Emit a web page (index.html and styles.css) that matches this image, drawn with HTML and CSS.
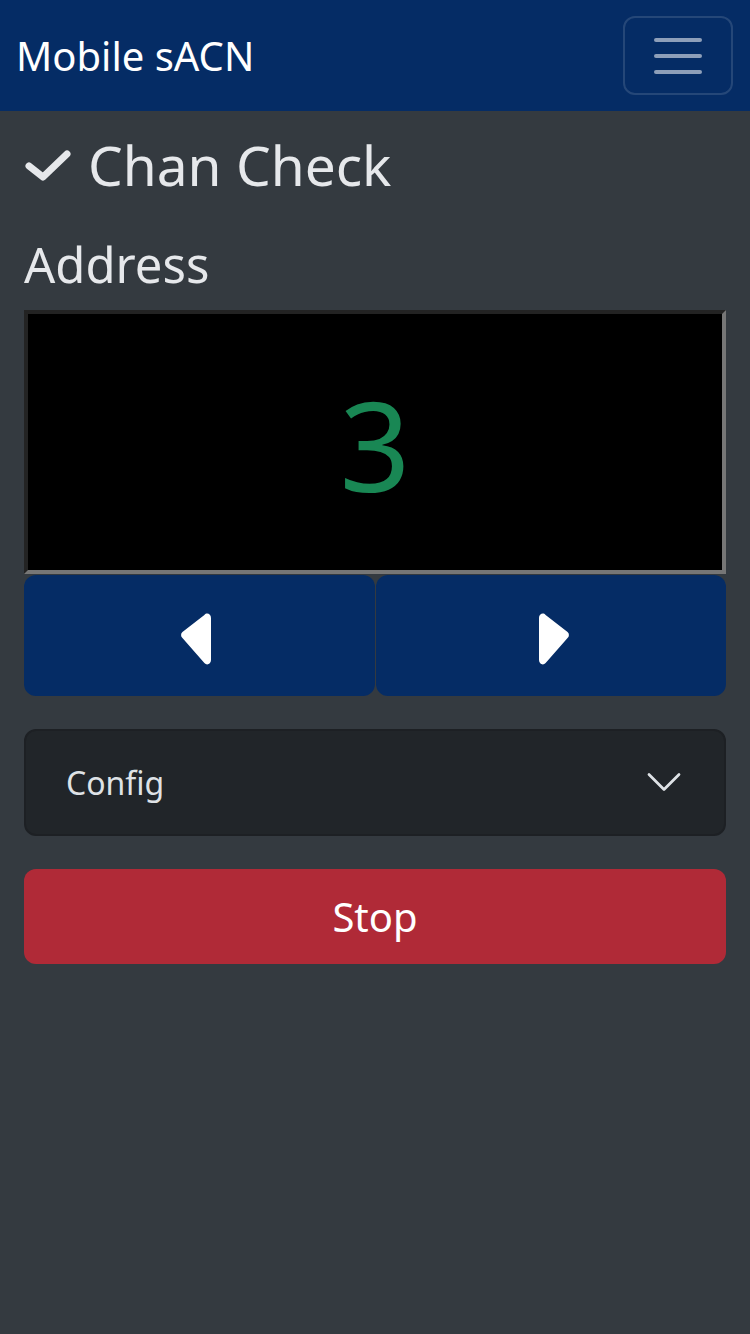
FILE: index.html
```html
<!DOCTYPE html>
<html lang="en">
<head>
<meta charset="utf-8">
<title>Mobile sACN</title>
<link rel="stylesheet" href="styles.css">
</head>
<body>
<nav class="navbar">
  <span class="brand">Mobile sACN</span>
  <button class="toggler" aria-label="Menu">
    <span class="bar"></span><span class="bar"></span><span class="bar"></span>
  </button>
</nav>
<main class="content">
  <h1 class="title">
    <svg class="check" viewBox="0 0 48 48" width="48" height="48" aria-hidden="true">
      <polyline points="5,23 19,34 43,11" fill="none" stroke="currentColor" stroke-width="7" stroke-linecap="round" stroke-linejoin="round"/>
    </svg>
    <span>Chan Check</span>
  </h1>
  <h2 class="label">Address</h2>
  <div class="display"><span class="value">3</span></div>
  <div class="arrows">
    <button class="arrow-btn" aria-label="Previous">
      <svg viewBox="0 0 16 16" width="64" height="64" aria-hidden="true"><path fill="#fff" d="m3.86 8.753 5.482 6.267c.646.738 1.658.205 1.658-.753V3.733c0-.958-1.012-1.49-1.658-.753L3.86 7.247a1 1 0 0 0 0 1.506z"/></svg>
    </button>
    <button class="arrow-btn" aria-label="Next">
      <svg viewBox="0 0 16 16" width="64" height="64" aria-hidden="true"><path fill="#fff" d="m12.14 8.753-5.482 6.267c-.646.738-1.658.205-1.658-.753V3.733c0-.958 1.012-1.49 1.658-.753l5.482 4.267a1 1 0 0 1 0 1.506z"/></svg>
    </button>
  </div>
  <div class="accordion">
    <button class="acc-btn">
      <span>Config</span>
      <svg viewBox="0 0 16 16" width="40" height="40" aria-hidden="true"><path d="M2 5L8 11L14 5" fill="none" stroke="#dee2e6" stroke-width="1.1" stroke-linecap="round" stroke-linejoin="round"/></svg>
    </button>
  </div>
  <button class="stop-btn">Stop</button>
</main>
</body>
</html>
```

FILE: styles.css
```css
* { box-sizing: border-box; }
html, body {
  margin: 0;
  padding: 0;
  background: #343a40;
  min-height: 100%;
}
body {
  font-family: "Noto Sans", "Open Sans", sans-serif;
  color: #dee2e6;
  width: 750px;
  min-height: 1334px;
}
button {
  font-family: inherit;
  cursor: pointer;
}
.navbar {
  height: 111px;
  background: #052c65;
  display: flex;
  align-items: center;
  justify-content: space-between;
  padding: 0 17px 0 16px;
}
.brand {
  font-size: 40px;
  color: #fff;
  line-height: 1.5;
}
.toggler {
  width: 110px;
  height: 79px;
  background: transparent;
  border: 2px solid rgba(255, 255, 255, 0.13);
  border-radius: 12px;
  display: flex;
  flex-direction: column;
  align-items: center;
  justify-content: center;
  gap: 12px;
  padding: 0;
}
.bar {
  display: block;
  width: 48px;
  height: 4px;
  border-radius: 2px;
  background: rgba(255, 255, 255, 0.55);
}
.content {
  padding: 21px 24px;
}
.title {
  margin: 0 0 37px;
  font-size: 55px;
  font-weight: 400;
  line-height: 1.2;
  color: #e6e8eb;
  display: flex;
  align-items: center;
  gap: 16px;
}
.check {
  flex: none;
  margin-top: 4px;
}
.label {
  margin: 0 0 16px;
  font-size: 49px;
  font-weight: 400;
  line-height: 1.2;
  color: #e6e8eb;
}
.display {
  height: 264px;
  background: #000;
  border-style: solid;
  border-width: 4px;
  border-color: #232323 #767676 #767676 #232323;
  display: flex;
  align-items: center;
  justify-content: center;
}
.value {
  color: #198754;
  font-size: 124px;
  line-height: 1;
  margin-top: 4px;
}
.arrows {
  display: flex;
  gap: 1px;
  margin-top: 1px;
}
.arrow-btn {
  flex: 1;
  height: 121px;
  background: #052c65;
  border: none;
  border-radius: 12px;
  display: flex;
  align-items: center;
  justify-content: center;
  padding: 0;
}
.accordion {
  margin-top: 33px;
  border: 2px solid #1d2024;
  border-radius: 12px;
  background: #212529;
  overflow: hidden;
}
.acc-btn {
  width: 100%;
  height: 103px;
  background: transparent;
  border: none;
  display: flex;
  align-items: center;
  justify-content: space-between;
  padding: 0 40px;
  color: #dee2e6;
  font-size: 32px;
  text-align: left;
}
.stop-btn {
  display: block;
  width: 100%;
  margin-top: 33px;
  height: 95px;
  border: none;
  border-radius: 12px;
  background: #b02a37;
  color: #fff;
  font-size: 40px;
}
```
